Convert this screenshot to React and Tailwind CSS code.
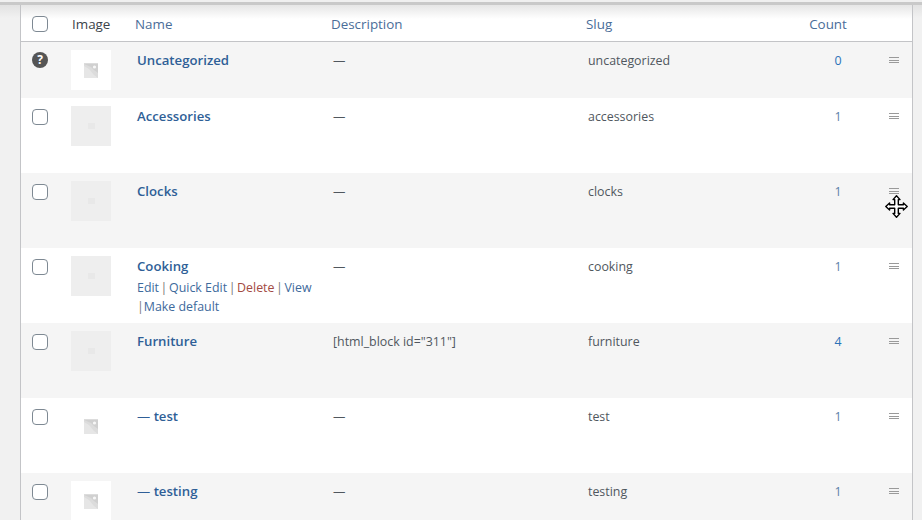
const rows = [
  { prefix: "", name: "Uncategorized", desc: "—", slug: "uncategorized", count: "0", h: "h-[56px]", bg: "bg-[#f5f5f5]", thumb: "white", q: true, countBlue: true },
  { prefix: "", name: "Accessories", desc: "—", slug: "accessories", count: "1", h: "h-[75px]", bg: "bg-white", thumb: "gray" },
  { prefix: "", name: "Clocks", desc: "—", slug: "clocks", count: "1", h: "h-[75px]", bg: "bg-[#f5f5f5]", thumb: "gray" },
  { prefix: "", name: "Cooking", desc: "—", slug: "cooking", count: "1", h: "h-[75px]", bg: "bg-white", thumb: "gray", actions: true },
  { prefix: "", name: "Furniture", desc: '[html_block id="311"]', slug: "furniture", count: "4", h: "h-[75px]", bg: "bg-[#f5f5f5]", thumb: "gray", countBlue: true },
  { prefix: "— ", name: "test", desc: "—", slug: "test", count: "1", h: "h-[75px]", bg: "bg-white", thumb: "white" },
  { prefix: "— ", name: "testing", desc: "—", slug: "testing", count: "1", h: "h-[75px]", bg: "bg-[#f5f5f5]", thumb: "white" },
];

const gridCols = "grid grid-cols-[50px_64px_196px_255px_200px_84px_1fr]";

function Placeholder() {
  return (
    <svg width="14" height="15" viewBox="0 0 14 15" className="block">
      <rect width="14" height="15" fill="#dcdcdc" />
      <path d="M0 3 L5 6 L10 12 L14 15 L0 15 Z" fill="#e6e6e6" />
      <path d="M0 1 H14 V10 L10 7 L7 4 Z" fill="#d0d0d0" />
      <circle cx="10.5" cy="4" r="1.6" fill="#f7f7f7" />
    </svg>
  );
}

function Thumb({ kind }) {
  if (kind === "white") {
    return (
      <div className="w-10 h-10 bg-white flex items-center justify-center">
        <Placeholder />
      </div>
    );
  }
  return (
    <div className="w-10 h-10 bg-[#eeeeee] flex items-center justify-center">
      <div className="w-[7px] h-[6px] bg-[#e8e8e8]" />
    </div>
  );
}

function Check() {
  return <div className="w-4 h-4 bg-white border border-[#7e8993] rounded-[4px]" />;
}

function Handle() {
  return (
    <div className="flex flex-col gap-[1.5px] w-[10px]">
      <div className="h-px bg-[#9a9a9a]" />
      <div className="h-px bg-[#9a9a9a]" />
      <div className="h-px bg-[#9a9a9a]" />
    </div>
  );
}

function Sep() {
  return <span className="inline-block w-[10px] text-center text-[#777]">|</span>;
}

function Row({ r }) {
  return (
    <div className={`${gridCols} ${r.h} ${r.bg}`}>
      <div className={`pl-[11px] ${r.q ? "pt-[10px]" : "pt-[11px]"}`}>
        {r.q ? (
          <div className="w-4 h-4 rounded-full bg-[#555555] text-white text-[12px] leading-4 font-bold text-center">?</div>
        ) : (
          <Check />
        )}
      </div>
      <div className="pt-[8px]">
        <Thumb kind={r.thumb} />
      </div>
      <div className="pl-[2px] pt-[9px]">
        <div className="text-[13.2px] leading-[19px] font-semibold text-[#2f5f97]">
          {r.prefix && <span className="font-normal">{r.prefix}</span>}
          {r.name}
        </div>
        {r.actions && (
          <div className="text-[12.4px] leading-[19px] text-[#3e6a9c] mt-[2px]">
            <div>
              Edit<Sep />Quick Edit<Sep /><span className="text-[#a34a42]">Delete</span><Sep />View
            </div>
            <div>
              <span className="text-[#777]">|</span>Make default
            </div>
          </div>
        )}
      </div>
      <div className="pl-[2px] pt-[9px] text-[12.4px] leading-[19px] text-[#50575e]">{r.desc}</div>
      <div className="pl-[2px] pt-[9px] text-[12.4px] leading-[19px] text-[#50575e]">{r.slug}</div>
      <div className={`pt-[9px] text-[12.4px] leading-[19px] text-center pl-[20px] ${r.countBlue ? "text-[#2b72b8]" : "text-[#5a80a8]"}`}>{r.count}</div>
      <div className="pt-[15px] flex justify-center pl-[5px]">
        <Handle />
      </div>
    </div>
  );
}

export default function App() {
  return (
    <div className="relative h-[520px] overflow-hidden bg-[#f1f1f1] bg-[linear-gradient(to_bottom,#f0f0f0_0,#f0f0f0_2px,#c9c9c9_2px,#c9c9c9_5px,#e2e2e2_5px,#f1f1f1_18px)] font-['Open_Sans','Noto_Sans',sans-serif]">
      <div className="h-[5px]" />
      <div className="ml-[20px] mr-[9px] border-x border-[#c3c4c7] bg-white">
        <div className={`${gridCols} h-[37px] pt-[2px] border-b border-[#c3c4c7] bg-[linear-gradient(to_bottom,#e6e6e6_0,#ffffff_14px)] items-center text-[13.4px]`}>
          <div className="pl-[11px]"><Check /></div>
          <div className="pl-[1px] text-[#3c434a]">Image</div>
          <div className="text-[#4a6d99]">Name</div>
          <div className="text-[#4a6d99]">Description</div>
          <div className="text-[#4a6d99]">Slug</div>
          <div className="text-[#4a6d99] text-center">Count</div>
          <div />
        </div>
        {rows.map((r) => (
          <Row key={r.slug} r={r} />
        ))}
      </div>
      <svg className="absolute left-[885px] top-[195px]" width="23" height="23" viewBox="0 0 23 23">
        <path
          d="M11.5 0.8 L15 4.6 H13.3 V9.7 H18.4 V8 L22.2 11.5 L18.4 15 V13.3 H13.3 V18.4 H15 L11.5 22.2 L8 18.4 H9.7 V13.3 H4.6 V15 L0.8 11.5 L4.6 8 V9.7 H9.7 V4.6 H8 Z"
          fill="white"
          stroke="black"
          strokeWidth="1.4"
          strokeLinejoin="round"
        />
      </svg>
    </div>
  );
}
